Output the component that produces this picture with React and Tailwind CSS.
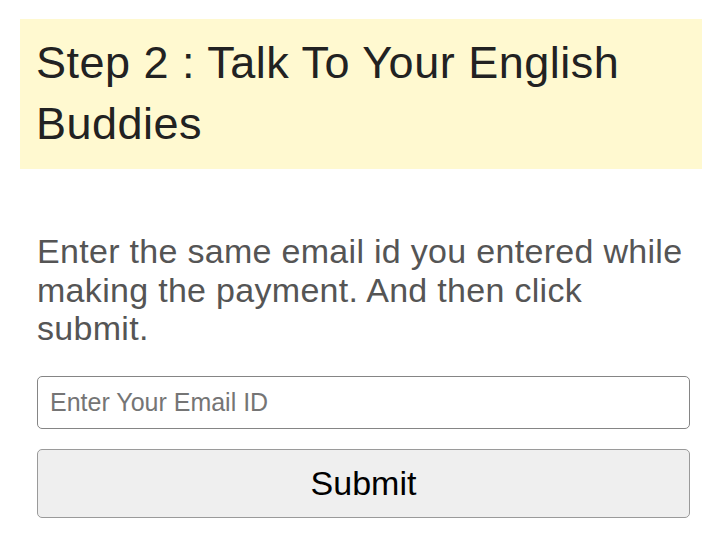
export default function App() {
  return (
    <div className="min-h-[544px] bg-white pt-[19px] pl-5 pr-6 font-['Liberation_Sans',Arial,sans-serif]">
      {/* Step heading */}
      <div className="bg-[#fff9d0] pl-[16px] pr-4 pt-[13px] pb-[15px]">
        <h1 className="text-[45px] leading-[61px] tracking-[0.5px] text-[#222]">
          Step 2 : Talk To Your English Buddies
        </h1>
      </div>

      <div className="pl-[17px] pr-[12px] pt-[63px]">
        <p className="text-[34px] leading-[38.5px] tracking-[0.3px] text-[#555]">
          Enter the same email id you entered while making the payment. And then click submit.
        </p>

        <input
          type="email"
          placeholder="Enter Your Email ID"
          className="mt-[28px] block w-full h-[53px] rounded-[5px] border border-[#858585] bg-white px-3 text-[25px] text-[#333] placeholder:text-[#757575] outline-none"
        />

        <button className="mt-[20px] block w-full h-[69px] rounded-[5px] border border-[#9a9a9a] bg-[#efefef] text-[34px] text-black">
          Submit
        </button>
      </div>
    </div>
  );
}
